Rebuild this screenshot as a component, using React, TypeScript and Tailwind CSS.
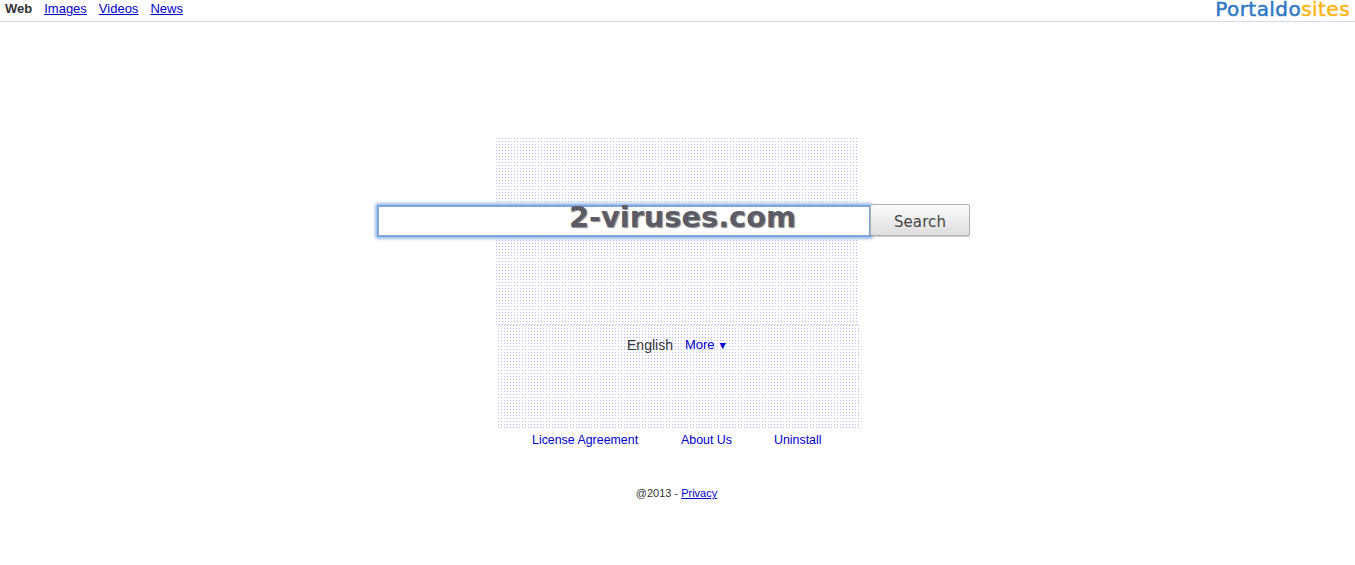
const arial = 'font-["Liberation_Sans",Arial,sans-serif]';

function Dots({ className }: { className: string }) {
  return (
    <div
      className={`absolute bg-[conic-gradient(from_270deg_at_1px_1px,#b4b4fa_25%,transparent_0)] bg-[length:3px_3px] ${className}`}
    />
  );
}

export default function App() {
  const tabs = ['Images', 'Videos', 'News'];
  const footer = [
    { label: 'License Agreement', width: 'w-[149px]' },
    { label: 'About Us', width: 'w-[93px]' },
    { label: 'Uninstall', width: 'w-auto' },
  ];

  return (
    <div className={`relative h-[565px] overflow-hidden bg-white text-[#333] ${arial}`}>
      <Dots className="left-[496px] top-[138px] h-[187px] w-[362px]" />
      <Dots className="left-[498px] top-[325px] h-[103px] w-[362px]" />

      {/* Top bar */}
      <header className="relative flex h-[22px] items-start justify-between border-b border-[#d3d8e8] pl-[5px] pr-[5px]">
        <nav className="flex gap-3 pt-[1px] text-[13px] leading-[15px]">
          <span className="font-bold">Web</span>
          {tabs.map((tab) => (
            <a key={tab} href="#" className="text-[#0000cc] underline">
              {tab}
            </a>
          ))}
        </nav>
        <div className='font-["DejaVu_Sans",sans-serif] text-[20px] leading-[18px] tracking-[0.45px] [-webkit-text-stroke:0.5px]'>
          <span className="text-[#2f78c4]">Portaldo</span>
          <span className="text-[#fdb515]">sites</span>
        </div>
      </header>

      {/* Search */}
      <main className="relative flex flex-col">
        <div className="flex justify-center pt-[182px] pr-2">
          <input
            className="-mr-px mt-px h-8 w-[494px] rounded-[1px] border-2 border-[#7da6dc] bg-white shadow-[0_0_3px_2px_#9dbdea] outline-none"
            aria-label="Search"
          />
          <button className='relative h-8 w-[100px] rounded-[2px] border border-[#b0b0b0] bg-gradient-to-b from-[#fbfbfb] to-[#dedede] pt-[3px] font-["DejaVu_Sans",sans-serif] text-[15px] leading-5 tracking-[0.1px] text-[#444] shadow-[0_1px_1px_rgba(0,0,0,0.2)]'>
            Search
          </button>
        </div>

        <div className="flex justify-center gap-3 pt-[100px] text-sm leading-4">
          <span>English</span>
          <a href="#" className="flex items-center gap-[3px] text-[13px] text-[#0000cc]">
            More
            <span className="text-[10.5px]">▼</span>
          </a>
        </div>

        <div className="flex pt-[80px] pl-[532px] text-[12.4px] leading-[14px] text-[#0000cc]">
          {footer.map((link) => (
            <a key={link.label} href="#" className={link.width}>
              {link.label}
            </a>
          ))}
        </div>

        <p className="pt-[40px] pr-[2px] text-center text-[11px] leading-[13px]">
          @2013 -{' '}
          <a href="#" className="text-[#0000cc] underline">
            Privacy
          </a>
        </p>
      </main>

      {/* Watermark */}
      <div className='absolute left-[569px] top-[197px] font-["DejaVu_Sans",sans-serif] text-[28.8px] leading-10 font-bold text-[#5c5c66] [text-shadow:1px_1px_1px_rgba(0,0,0,0.45)]'>
        2-viruses.com
      </div>
    </div>
  );
}
